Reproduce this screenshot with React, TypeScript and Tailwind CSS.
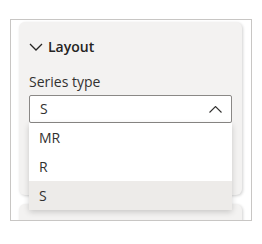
import React from "react";

const options = ["MR", "R", "S"];

function ChevronDown() {
  return (
    <svg width="14" height="8" viewBox="0 0 14 8" fill="none">
      <path d="M1 1l6 6 6-6" stroke="#252423" strokeWidth="1.3" />
    </svg>
  );
}

function ChevronUp() {
  return (
    <svg width="13" height="7" viewBox="0 0 13 7" fill="none">
      <path d="M0.5 6.5l6-6 6 6" stroke="#323130" strokeWidth="1.1" />
    </svg>
  );
}

export default function App() {
  const selected = "S";

  return (
    <div
      className="h-[244px] w-[262px] bg-white pl-[10px] pt-[19px] text-[#252423]"
      style={{ fontFamily: '"Open Sans", "Noto Sans", sans-serif' }}
    >
      <div className="h-[202px] w-[242px] overflow-hidden border border-[#c8c6c4] bg-white pl-[8px] pt-[2px]">
        <div className="relative z-10 h-[173px] w-[223px] rounded-[6px] bg-[#f3f2f1] px-[10px] pt-[16px] shadow-[1px_1px_3px_rgba(0,0,0,0.18)]">
          <div className="flex h-[18px] items-center gap-[5px]">
            <ChevronDown />
            <span className="text-[14px] font-semibold leading-none">Layout</span>
          </div>

          <div className="mt-[19px] text-[14px] leading-none text-[#323130]">Series type</div>

          <div className="relative mt-[6px]">
            <div className="flex h-[28px] w-[203px] items-center justify-between rounded-[2px] border border-[#8a8886] bg-white pl-[10px] pr-[9px]">
              <span className="text-[14px] leading-none text-[#323130]">{selected}</span>
              <ChevronUp />
            </div>

            <ul className="absolute left-0 top-[28px] w-[203px] bg-white shadow-[0_2px_6px_rgba(0,0,0,0.18)]">
              {options.map((o) => (
                <li
                  key={o}
                  className={
                    "flex h-[29px] items-center pl-[10px] text-[14px] leading-none text-[#323130] " +
                    (o === selected ? "bg-[#edebe9]" : "")
                  }
                >
                  {o}
                </li>
              ))}
            </ul>
          </div>
        </div>

        <div className="mt-[9px] h-[40px] w-[223px] rounded-[6px] bg-[#f3f2f1] shadow-[1px_1px_3px_rgba(0,0,0,0.18)]" />
      </div>
    </div>
  );
}
